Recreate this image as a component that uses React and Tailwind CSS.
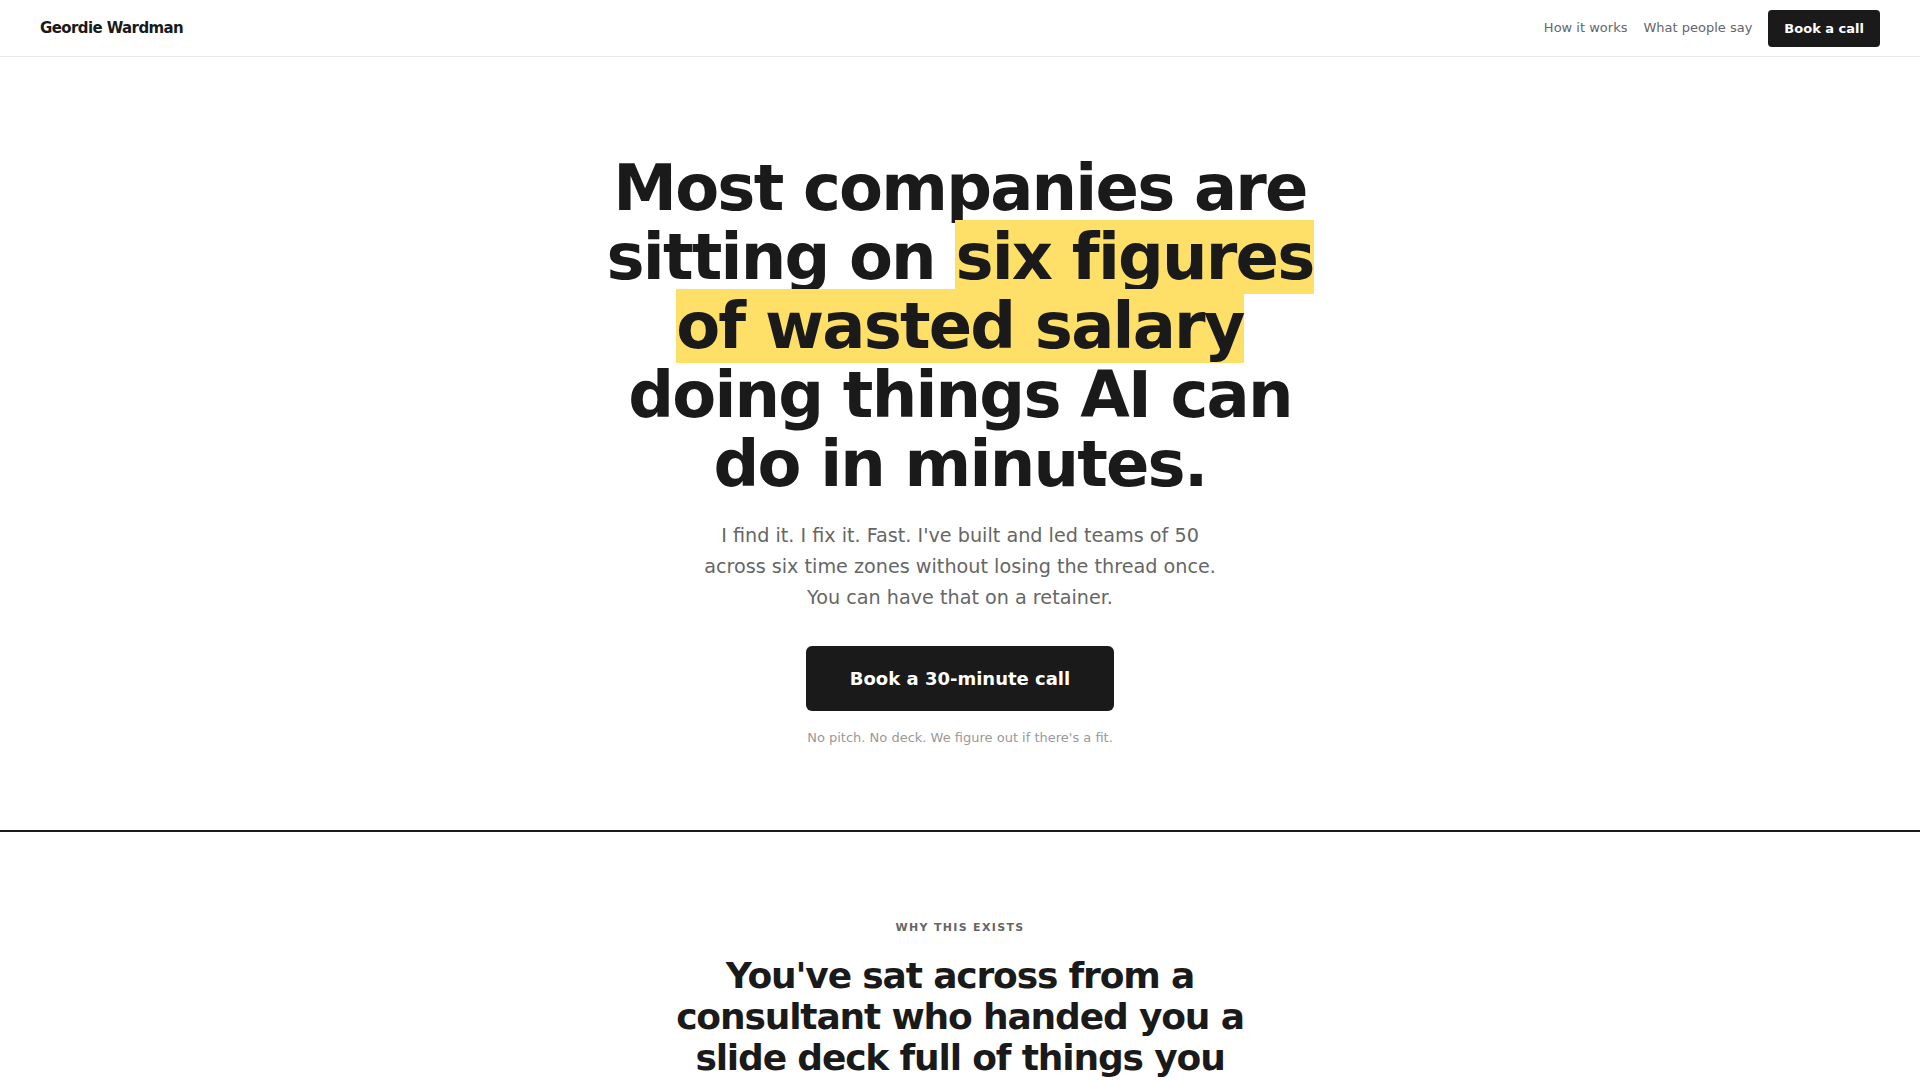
export default function App() {
  return (
    <div className="min-h-screen bg-white text-[#1a1a1a] font-['DejaVu_Sans','Liberation_Sans',sans-serif]">
      <header className="h-[57px] border-b border-[#ebebeb] px-10 flex items-center justify-between">
        <a href="#" className="text-[15px] font-bold tracking-[-0.04em] text-[#1a1a1a]">
          Geordie Wardman
        </a>
        <nav className="flex items-center gap-4">
          <a href="#how" className="text-[13px] text-[#666666]">How it works</a>
          <a href="#people" className="text-[13px] text-[#666666]">What people say</a>
          <a href="#book" className="rounded-[4px] bg-[#1a1a1a] px-4 py-2 text-[13px] font-bold leading-[21px] text-white">
            Book a call
          </a>
        </nav>
      </header>

      <section className="border-b-2 border-[#1a1a1a] pt-[97px] pb-[82px] px-6 flex flex-col items-center text-center">
        <h1 className="max-w-[730px] text-[64px] font-bold leading-[1.08] tracking-[-0.028em]">
          Most companies are sitting on{" "}
          <span className="bg-[#fedf67] box-decoration-clone">six figures of wasted salary</span>{" "}
          doing things AI can do in minutes.
        </h1>
        <p className="mt-5 max-w-[525px] text-[19.2px] leading-[31px] text-[#666666]">
          I find it. I fix it. Fast. I've built and led teams of 50 across six time zones without losing the thread once. You can have that on a retainer.
        </p>
        <a href="#book" className="mt-[33px] rounded-md bg-[#1a1a1a] px-11 py-5 text-[18px] font-bold leading-[25px] text-white">
          Book a 30-minute call
        </a>
        <p className="mt-[17px] text-[13px] leading-[20px] text-[#999999]">
          No pitch. No deck. We figure out if there's a fit.
        </p>
      </section>

      <section className="pt-[88px] pb-24 px-6 flex flex-col items-center text-center">
        <p className="text-[11px] font-bold uppercase tracking-[0.12em] leading-[16px] text-[#666666]">
          Why this exists
        </p>
        <h2 className="mt-[19px] max-w-[600px] text-[36px] font-bold leading-[1.15] tracking-[-0.032em]">
          You've sat across from a consultant who handed you a slide deck full of things you already knew.
        </h2>
        <p className="mt-6 max-w-[560px] text-[18px] leading-[30px] text-[#666666]">
          Then they left, and nothing changed. I do the work myself, inside your team, until it is done.
        </p>
      </section>
    </div>
  );
}
